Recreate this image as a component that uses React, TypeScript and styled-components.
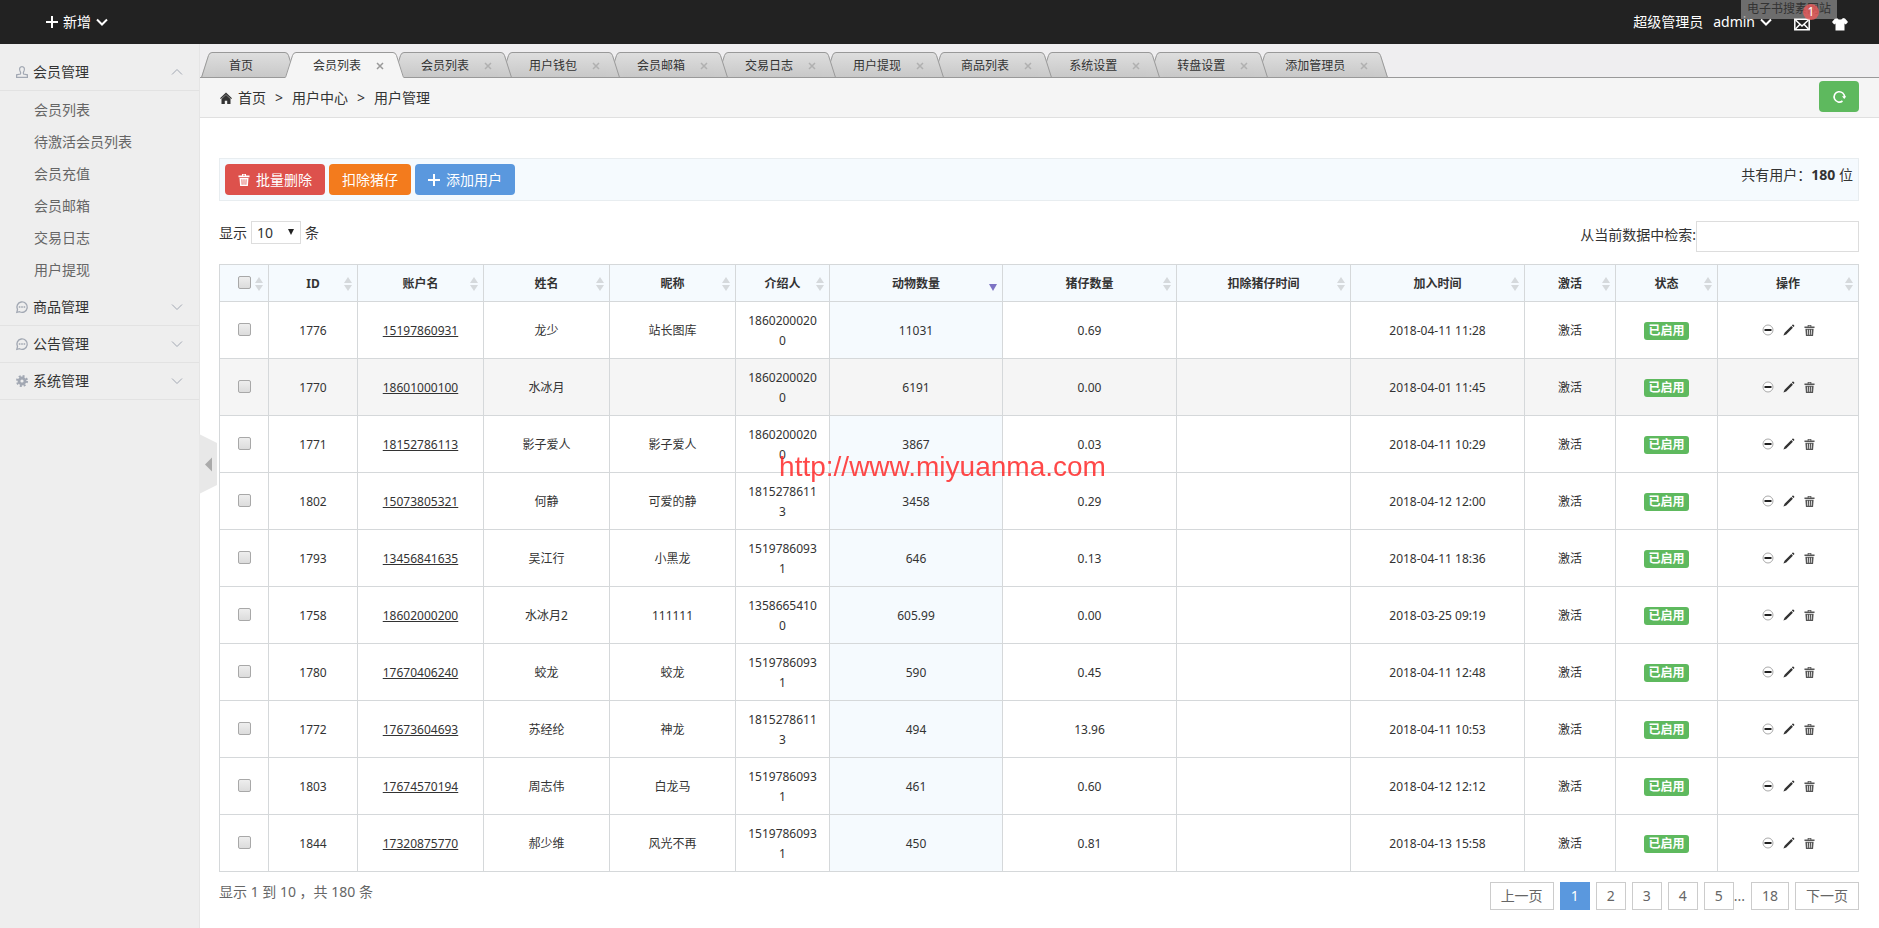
import React from "react";
import styled, { createGlobalStyle, css } from "styled-components";

const Global = createGlobalStyle`
  *, *::before, *::after { box-sizing: border-box; }
  body {
    margin: 0;
    background: #fff;
    color: #333;
    font: 14px/20px "Noto Sans", "Noto Sans CJK SC", sans-serif;
  }
  a { color: inherit; text-decoration: none; }
  button, input, select { font: inherit; color: inherit; margin: 0; }
  button { border: 0; background: none; padding: 0; cursor: pointer; }
  ul, ol { margin: 0; padding: 0; list-style: none; }
`;

/* ---------- icons ---------- */

const Icon = styled.svg<{ $size?: number }>`
  display: block;
  flex: none;
  width: ${(p) => p.$size ?? 12}px;
  height: ${(p) => p.$size ?? 12}px;
  overflow: visible;
`;

const PlusIcon = () => (
  <Icon viewBox="0 0 12 12" fill="currentColor">
    <path d="M5 0h2v5h5v2H7v5H5V7H0V5h5z" />
  </Icon>
);

const ChevronIcon = ({ up, size = 12, width = 2 }: { up?: boolean; size?: number; width?: number }) => (
  <Icon $size={size} viewBox="0 0 12 12" fill="none" stroke="currentColor" strokeWidth={width}>
    <path d={up ? "M1 8.5l5-5 5 5" : "M1 3.5l5 5 5-5"} />
  </Icon>
);

const MailIcon = () => (
  <Icon $size={16} viewBox="0 0 16 16" fill="none" stroke="currentColor" strokeWidth="1.5">
    <path d="M.8 3.3h14.4v10.4H.8z" />
    <path d="M1.5 4l6.500 6L14.500 4M1.500 13l4.300-4.500M14.500 13l-4.300-4.500" />
  </Icon>
);

const ShirtIcon = () => (
  <Icon $size={16} viewBox="0 0 16 16" fill="currentColor">
    <path d="M5.200 2C6 4 10 4 10.800 2L13 2.500 16 6l-2.200 2.500-1.300-1V14.500h-9V7.500l-1.300 1L0 6l3-3.500z" />
  </Icon>
);

const HomeIcon = () => (
  <Icon viewBox="0 0 12 12" fill="currentColor">
    <path d="M6 .5l6 5.700-.9.9L6 2.500.9 7.100 0 6.200z" />
    <path d="M6 2.800l4.500 4.100V12H7.200V8.800H4.800V12H1.500V6.900z" />
  </Icon>
);

const RefreshIcon = () => (
  <Icon $size={13} viewBox="0 0 13 13" fill="none" stroke="currentColor" strokeWidth="1.600">
    <path d="M9.500 11a5.200 5.200 0 1 1 2-3.800" />
    <path d="M9 6.200h4.200L11.300 9z" fill="currentColor" stroke="none" />
  </Icon>
);

const TrashIcon = ({ size = 11 }: { size?: number }) => (
  <Icon $size={size} viewBox="0 0 12 12" fill="currentColor">
    <path d="M4 0h4v1.500h3.500V3.200H.5V1.500H4zM5 .8v.7h2V.8z" fillRule="evenodd" />
    <path
      d="M1.500 4h9l-.6 8H2.100zM3.500 5.300l.2 5.400h.8l-.2-5.400zM5.600 5.300v5.400h.8V5.300zM7.700 5.300l-.2 5.400h.8l.2-5.400z"
      fillRule="evenodd"
    />
  </Icon>
);

const StopIcon = () => (
  <Icon viewBox="0 0 12 12">
    <circle cx="6" cy="6" r="5" fill="#fff" stroke="#aaa" />
    <path d="M2.500 5h7v2h-7z" fill="#222" />
  </Icon>
);

const PencilIcon = () => (
  <Icon viewBox="0 0 12 12" fill="currentColor">
    <path d="M9.700.6c.6-.5 2.100.9 1.600 1.600L10.400 3 8.900 1.500zM8.300 2.100l1.600 1.600L3.200 10.400.4 11.600 1.600 8.800z" />
  </Icon>
);

const MemberIcon = () => (
  <Icon viewBox="0 0 12 12" fill="none" stroke="currentColor" strokeWidth="1.200">
    <path d="M4.500 8c.6-1.500 0-2.200-.6-3.200C3 2.600 4 .6 6 .6s3 2 2.100 4.200C7.500 5.800 6.900 6.500 7.500 8l3.900.8v2.600H.6V8.800z" />
  </Icon>
);

const CommentIcon = () => (
  <Icon viewBox="0 0 12 12" fill="none" stroke="currentColor" strokeWidth="1.300">
    <path d="M.8 11.400l.7-2.800A5.200 5.200 0 1 1 3.600 10.700z" />
    <path d="M2.800 6h1.600M5.200 6h1.600M7.600 6h1.600" strokeWidth="1.700" />
  </Icon>
);

const GearIcon = () => (
  <Icon viewBox="0 0 12 12" fill="none" stroke="currentColor">
    <circle cx="6" cy="6" r="5" strokeWidth="2" strokeDasharray="2 1.930" />
    <circle cx="6" cy="6" r="3" strokeWidth="2.800" />
  </Icon>
);

const SortIcon = ({ active }: { active?: boolean }) => (
  <svg width="8" height="14" viewBox="0 0 8 14" aria-hidden="true">
    {active ? (
      <path d="M0 7h8l-4 7z" fill="#7d73c4" />
    ) : (
      <path d="M4 0l4 6H0zM0 8h8l-4 6z" fill="#d5d9dc" />
    )}
  </svg>
);

/* ---------- top bar ---------- */

const TopBar = styled.header`
  position: relative;
  display: flex;
  justify-content: space-between;
  align-items: center;
  height: 44px;
  padding: 0 31px 0 46px;
  background: #222;
  color: #fff;
`;

const TopButton = styled.button`
  display: flex;
  align-items: center;
  gap: 5px;
`;

const TopGroup = styled.div`
  display: flex;
  align-items: center;
  gap: 22px;
`;

const Account = styled.div`
  display: flex;
  align-items: center;
  gap: 10px;
`;

const MailButton = styled.button`
  position: relative;
  z-index: 1;
  margin-top: 3px;
`;

const ThemeButton = styled.button`
  margin-top: 3px;
`;

const Badge = styled.span`
  position: absolute;
  top: -12px;
  right: -9px;
  width: 16px;
  height: 16px;
  border-radius: 8px;
  background: rgba(235, 90, 90, 0.8);
  font-size: 12px;
  line-height: 16px;
`;

const Tooltip = styled.div`
  position: absolute;
  top: 0;
  right: 42px;
  height: 19px;
  padding: 0 6px;
  background: rgba(150, 150, 150, 0.65);
  color: #333;
  font-size: 12px;
  line-height: 17px;
`;

/* ---------- frame ---------- */

const Frame = styled.div`
  display: flex;
  min-height: calc(100vh - 44px);
`;

const Sidebar = styled.nav`
  position: relative;
  flex: none;
  width: 200px;
  padding-top: 10px;
  border-right: 1px solid #e5e5e5;
  background: #eee;
`;

const MenuHeading = styled.button`
  display: flex;
  align-items: center;
  width: 100%;
  height: 37px;
  padding: 0 16px;
  border-bottom: 1px solid #e2e2e2;
  gap: 5px;
  color: #a2a8b3;
`;

const MenuTitle = styled.span`
  flex: 1;
  color: #333;
  text-align: left;
`;

const SubMenu = styled.ul`
  padding: 3px 0;
`;

const SubLink = styled.a`
  display: block;
  padding-left: 34px;
  color: #666;
  line-height: 32px;
`;

const Handle = styled.button`
  position: absolute;
  top: 390px;
  left: 199px;
  z-index: 20;
`;

const Main = styled.main`
  flex: 1;
  min-width: 0;
`;

/* ---------- tabs ---------- */

const TabBar = styled.ul`
  display: flex;
  height: 34px;
  padding: 8px 0 0 12px;
  background: #efeef0;
  box-shadow: inset 0 -1px #999;
`;

const TabItem = styled.li<{ $level: number }>`
  position: relative;
  z-index: ${(p) => p.$level};
  display: flex;
  height: 26px;
  margin-left: -11px;
`;

const TabBody = styled.div<{ $active?: boolean }>`
  display: flex;
  align-items: center;
  gap: 15px;
  padding: 1px 6px 0 14px;
  border-top: 1px solid #999;
  border-bottom: 1px solid ${(p) => (p.$active ? "#f5f5f5" : "#999")};
  background: ${(p) => (p.$active ? "#f5f5f5" : "linear-gradient(#dedede, #c8c8c8)")};
  font-size: 12px;
  white-space: nowrap;
`;

const TabClose = styled.button<{ $active?: boolean }>`
  width: 8px;
  color: ${(p) => (p.$active ? "#999" : "#b0b0b0")};
`;

const CloseSpace = styled.span`
  width: 8px;
`;

const Cap = styled.svg`
  display: block;
  flex: none;
`;

const TabCap = ({ right, active, id }: { right?: boolean; active?: boolean; id: string }) => (
  <Cap width="14" height="26" viewBox="0 0 14 26">
    <defs>
      <linearGradient id={id} x1="0" y1="0" x2="0" y2="1">
        <stop offset="0" stopColor={active ? "#f5f5f5" : "#dedede"} />
        <stop offset="1" stopColor={active ? "#f5f5f5" : "#c8c8c8"} />
      </linearGradient>
    </defs>
    <g transform={right ? "translate(14 0) scale(-1 1)" : undefined}>
      <path d="M0 26L7 3.500Q8 .5 11 .5H14V26z" fill={`url(#${id})`} />
      <path d="M.5 25.500L7.500 3.500Q8.500 .5 11 .5H14" fill="none" stroke="#999" />
      {!active && <path d="M0 25.500H14" stroke="#999" />}
    </g>
  </Cap>
);

/* ---------- breadcrumb ---------- */

const Crumbs = styled.div`
  display: flex;
  align-items: center;
  justify-content: space-between;
  height: 40px;
  padding: 3px 20px 5px;
  border-bottom: 1px solid #e0e0e0;
  background: #f5f5f5;
`;

const CrumbList = styled.ol`
  display: flex;
  align-items: center;
  gap: 9px;
  padding-top: 2px;
`;

const CrumbLink = styled.a`
  display: flex;
  align-items: center;
  gap: 6px;
`;

/* ---------- content ---------- */

const Content = styled.section`
  padding: 40px 20px 18px 19px;
`;

const Toolbar = styled.div`
  display: flex;
  justify-content: space-between;
  padding: 5px;
  border: 1px solid #e8edf0;
  background: #f5fafe;
`;

const ButtonRow = styled.div`
  display: flex;
  gap: 4px;
`;

const Total = styled.span`
  padding-top: 1px;
`;

const ActionButton = styled.button<{ $color: string }>`
  display: flex;
  align-items: center;
  justify-content: center;
  gap: 6px;
  height: 31px;
  min-width: 40px;
  padding: 0 13px;
  border-radius: 4px;
  background: ${(p) => p.$color};
  color: #fff;
`;

const Filters = styled.div`
  display: flex;
  justify-content: space-between;
  align-items: flex-start;
  margin: 20px 0 12px;
`;

const LengthLabel = styled.label`
  display: flex;
  align-items: center;
  gap: 4px;
`;

const SelectBox = styled.span`
  position: relative;
  display: block;

  svg {
    position: absolute;
    top: 8px;
    right: 7px;
    pointer-events: none;
  }
`;

const Select = styled.select`
  display: block;
  appearance: none;
  width: 50px;
  height: 23px;
  padding: 0 5px;
  border: 1px solid #ddd;
  border-radius: 0;
  background: #fff;
`;

const SearchLabel = styled.label`
  display: flex;
  align-items: flex-start;
  line-height: 28px;
`;

const SearchInput = styled.input`
  width: 163px;
  height: 31px;
  padding: 4px;
  border: 1px solid #ddd;
`;

const DataTable = styled.table`
  width: 100%;
  table-layout: fixed;
  border-collapse: separate;
  border-spacing: 0;
  border: solid #d5d8da;
  border-width: 1px 0 0 1px;
  font-size: 12px;
  line-height: 20px;
  text-align: center;
`;

const cell = css`
  padding: 9px 10px 7px;
  border: solid #d5d8da;
  border-width: 0 1px 1px 0;
`;

const HeadCell = styled.th`
  ${cell}
  position: relative;
  background: #f5fafe;
  font-weight: bold;
  white-space: nowrap;

  > svg {
    position: absolute;
    top: 12px;
    right: 5px;
  }
`;

const Row = styled.tr<{ $hovered?: boolean }>`
  background: ${(p) => (p.$hovered ? "#f5f5f5" : "#fff")};
`;

const Cell = styled.td<{ $sorted?: boolean }>`
  ${cell}
  background: ${(p) => (p.$sorted ? "#f5fafe" : "transparent")};
  word-break: break-all;
`;

const Tick = styled.input`
  && {
    margin: 2px 0 0;
  }
  appearance: none;
  width: 13px;
  height: 13px;
  border: 1px solid #a8a8a8;
  border-radius: 2px;
  background: linear-gradient(#eee, #dcdcdc);
  vertical-align: top;
`;

const PhoneLink = styled.a`
  text-decoration: underline;
`;

const Status = styled.span`
  display: inline-block;
  padding: 0 4px;
  border-radius: 3px;
  background: #5eb95e;
  color: #fff;
  font-weight: bold;
  line-height: 18px;
`;

const RowActions = styled.div`
  display: flex;
  justify-content: center;
  gap: 9px;
  padding-bottom: 2px;
`;

const DeleteButton = styled.button`
  color: #555;
`;

const Footer = styled.div`
  display: flex;
  justify-content: space-between;
  align-items: flex-start;
  margin-top: 10px;
  color: #666;
`;

const Pager = styled.nav`
  display: flex;
  gap: 6px;
`;

const PageLink = styled.a<{ $current?: boolean }>`
  min-width: 30px;
  padding: 3px 10px;
  border: 1px solid ${(p) => (p.$current ? "#5a98de" : "#ccc")};
  background: ${(p) => (p.$current ? "#5a98de" : "#fff")};
  color: ${(p) => (p.$current ? "#fff" : "#666")};
  text-align: center;
`;

const LastNumbered = styled.span`
  display: flex;
  align-items: center;
`;

const Watermark = styled.div`
  position: fixed;
  top: 50%;
  left: 50%;
  z-index: 30;
  transform: translate(-50%, -50%);
  margin: 3px 0 0 3px;
  color: rgba(255, 40, 40, 0.85);
  font: 28px/32px "Liberation Sans", sans-serif;
  pointer-events: none;
`;

/* ---------- data ---------- */

const tabs = [
  "首页", "会员列表", "会员列表", "用户钱包", "会员邮箱", "交易日志",
  "用户提现", "商品列表", "系统设置", "转盘设置", "添加管理员",
];

const memberLinks = ["会员列表", "待激活会员列表", "会员充值", "会员邮箱", "交易日志", "用户提现"];

const columns: [string, number][] = [
  ["", 49], ["ID", 89], ["账户名", 126], ["姓名", 126], ["昵称", 126], ["介绍人", 94], ["动物数量", 173],
  ["猪仔数量", 174], ["扣除猪仔时间", 174], ["加入时间", 174], ["激活", 91], ["状态", 102], ["操作", 141],
];

const users = [
  ["1776", "15197860931", "龙少", "站长图库", "18602000200", "11031", "0.69", "2018-04-11 11:28"],
  ["1770", "18601000100", "水冰月", "", "18602000200", "6191", "0.00", "2018-04-01 11:45"],
  ["1771", "18152786113", "影子爱人", "影子爱人", "18602000200", "3867", "0.03", "2018-04-11 10:29"],
  ["1802", "15073805321", "何静", "可爱的静", "18152786113", "3458", "0.29", "2018-04-12 12:00"],
  ["1793", "13456841635", "吴江行", "小黑龙", "15197860931", "646", "0.13", "2018-04-11 18:36"],
  ["1758", "18602000200", "水冰月2", "111111", "13586654100", "605.99", "0.00", "2018-03-25 09:19"],
  ["1780", "17670406240", "蛟龙", "蛟龙", "15197860931", "590", "0.45", "2018-04-11 12:48"],
  ["1772", "17673604693", "苏经纶", "神龙", "18152786113", "494", "13.96", "2018-04-11 10:53"],
  ["1803", "17674570194", "周志伟", "白龙马", "15197860931", "461", "0.60", "2018-04-12 12:12"],
  ["1844", "17320875770", "郝少维", "风光不再", "15197860931", "450", "0.81", "2018-04-13 15:58"],
];

const columnTotal = columns.reduce((sum, [, width]) => sum + width, 0);

export default function App() {
  return (
    <>
      <Global />
      <TopBar>
        <TopButton>
          <PlusIcon />
          新增
          <ChevronIcon />
        </TopButton>
        <TopGroup>
          <Account>
            <span>超级管理员</span>
            <TopButton>
              admin
              <ChevronIcon />
            </TopButton>
          </Account>
          <MailButton aria-label="邮件">
            <MailIcon />
            <Badge>1</Badge>
          </MailButton>
          <ThemeButton aria-label="换肤">
            <ShirtIcon />
          </ThemeButton>
        </TopGroup>
        <Tooltip>电子书搜素网站</Tooltip>
      </TopBar>

      <Frame>
        <Sidebar>
          <MenuHeading>
            <MemberIcon />
            <MenuTitle>会员管理</MenuTitle>
            <ChevronIcon up width={1} />
          </MenuHeading>
          <SubMenu>
            {memberLinks.map((name) => (
              <li key={name}>
                <SubLink href="#">{name}</SubLink>
              </li>
            ))}
          </SubMenu>
          <MenuHeading>
            <CommentIcon />
            <MenuTitle>商品管理</MenuTitle>
            <ChevronIcon width={1} />
          </MenuHeading>
          <MenuHeading>
            <CommentIcon />
            <MenuTitle>公告管理</MenuTitle>
            <ChevronIcon width={1} />
          </MenuHeading>
          <MenuHeading>
            <GearIcon />
            <MenuTitle>系统管理</MenuTitle>
            <ChevronIcon width={1} />
          </MenuHeading>
          <Handle aria-label="收起菜单">
            <svg width="18" height="60" viewBox="0 0 18 60" display="block">
              <path d="M0 0l18 9v42l-18 9z" fill="#e8e8e8" />
              <path d="M13 23.500v14L6 30.500z" fill="#aaa" />
            </svg>
          </Handle>
        </Sidebar>

        <Main>
          <TabBar>
            {tabs.map((name, i) => {
              const active = i === 1;
              return (
                <TabItem key={i} $level={active ? 15 : 12 - i}>
                  <TabCap id={`cap-left-${i}`} active={active} />
                  <TabBody $active={active}>
                    <a href="#">{name}</a>
                    {i === 0 ? (
                      <CloseSpace />
                    ) : (
                      <TabClose $active={active} aria-label="关闭">
                        <Icon $size={8} viewBox="0 0 8 8" stroke="currentColor" strokeWidth="1.500">
                          <path d="M1 1l6 6M7 1L1 7" />
                        </Icon>
                      </TabClose>
                    )}
                  </TabBody>
                  <TabCap id={`cap-right-${i}`} right active={active} />
                </TabItem>
              );
            })}
          </TabBar>

          <Crumbs>
            <CrumbList>
              <li>
                <CrumbLink href="#">
                  <HomeIcon />
                  首页
                </CrumbLink>
              </li>
              <li>&gt;</li>
              <li>用户中心</li>
              <li>&gt;</li>
              <li>用户管理</li>
            </CrumbList>
            <ActionButton $color="#5eb95e" aria-label="刷新">
              <RefreshIcon />
            </ActionButton>
          </Crumbs>

          <Content>
            <Toolbar>
              <ButtonRow>
                <ActionButton $color="#dd514c">
                  <TrashIcon size={12} />
                  批量删除
                </ActionButton>
                <ActionButton $color="#f37b1d">扣除猪仔</ActionButton>
                <ActionButton $color="#5a98de">
                  <PlusIcon />
                  添加用户
                </ActionButton>
              </ButtonRow>
              <Total>
                共有用户：<strong>180</strong> 位
              </Total>
            </Toolbar>

            <Filters>
              <LengthLabel>
                显示
                <SelectBox>
                  <Select defaultValue="10">
                    <option>10</option>
                    <option>25</option>
                    <option>50</option>
                  </Select>
                  <svg width="6" height="6" viewBox="0 0 6 6" aria-hidden="true">
                    <path d="M0 0h6L3 6z" fill="#222" />
                  </svg>
                </SelectBox>
                条
              </LengthLabel>
              <SearchLabel>
                从当前数据中检索:
                <SearchInput type="search" />
              </SearchLabel>
            </Filters>

            <DataTable>
              <colgroup>
                {columns.map(([name, width]) => (
                  <col key={name} style={{ width: `${(width / columnTotal) * 100}%` }} />
                ))}
              </colgroup>
              <thead>
                <tr>
                  {columns.map(([name]) => (
                    <HeadCell key={name} scope="col">
                      {name || <Tick type="checkbox" aria-label="全选" />}
                      <SortIcon active={name === "动物数量"} />
                    </HeadCell>
                  ))}
                </tr>
              </thead>
              <tbody>
                {users.map(([id, phone, name, nick, referrer, animals, piglets, joined], i) => (
                  <Row key={id} $hovered={i === 1}>
                    <Cell>
                      <Tick type="checkbox" aria-label={`选择 ${id}`} />
                    </Cell>
                    <Cell>{id}</Cell>
                    <Cell>
                      <PhoneLink href="#">{phone}</PhoneLink>
                    </Cell>
                    <Cell>{name}</Cell>
                    <Cell>{nick}</Cell>
                    <Cell>{referrer}</Cell>
                    <Cell $sorted={i !== 1}>{animals}</Cell>
                    <Cell>{piglets}</Cell>
                    <Cell />
                    <Cell>{joined}</Cell>
                    <Cell>激活</Cell>
                    <Cell>
                      <Status>已启用</Status>
                    </Cell>
                    <Cell>
                      <RowActions>
                        <button aria-label="停用">
                          <StopIcon />
                        </button>
                        <button aria-label="编辑">
                          <PencilIcon />
                        </button>
                        <DeleteButton aria-label="删除">
                          <TrashIcon />
                        </DeleteButton>
                      </RowActions>
                    </Cell>
                  </Row>
                ))}
              </tbody>
            </DataTable>

            <Footer>
              <span>显示 1 到 10 ，共 180 条</span>
              <Pager>
                <PageLink href="#">上一页</PageLink>
                <PageLink href="#" $current>
                  1
                </PageLink>
                <PageLink href="#">2</PageLink>
                <PageLink href="#">3</PageLink>
                <PageLink href="#">4</PageLink>
                <LastNumbered>
                  <PageLink href="#">5</PageLink>
                  ...
                </LastNumbered>
                <PageLink href="#">18</PageLink>
                <PageLink href="#">下一页</PageLink>
              </Pager>
            </Footer>
          </Content>
        </Main>
      </Frame>
      <Watermark>http://www.miyuanma.com</Watermark>
    </>
  );
}
